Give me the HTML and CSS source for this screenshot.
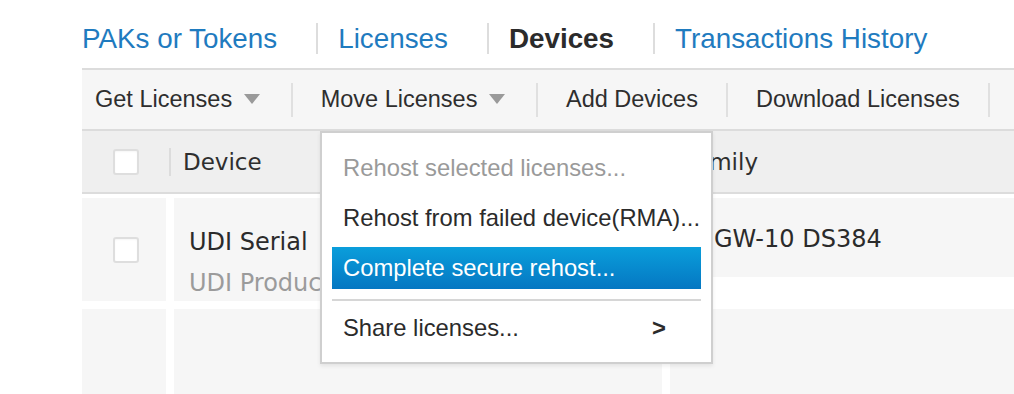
FILE: index.html
```html
<!DOCTYPE html>
<html lang="en">
<head>
    <meta charset="UTF-8">
    <meta name="viewport" content="width=device-width, initial-scale=1.0">
    <title>Devices</title>
    <link rel="stylesheet" href="styles.css">
</head>
<body>

<div class="page">
    <nav class="tabs">
        <a class="tab" href="#">PAKs or Tokens</a>
        <a class="tab" href="#">Licenses</a>
        <a class="tab active" href="#">Devices</a>
        <a class="tab" href="#">Transactions History</a>
    </nav>

    <div class="toolbar">
        <div class="tool first">Get Licenses <span class="caret"></span></div>
        <div class="tool">Move Licenses <span class="caret"></span></div>
        <div class="tool">Add Devices</div>
        <div class="tool">Download Licenses</div>
        <div class="tool"></div>
    </div>

    <div class="grid-head">
        <div class="head-check"><span class="checkbox"></span></div>
        <div class="head-device"><span class="head-label">Device</span></div>
        <div class="head-family">Family</div>
    </div>

    <div class="rows">
        <div class="cell check"><span class="checkbox"></span></div>
        <div class="cell device">
            <div class="serial">UDI Serial</div>
            <div class="product">UDI Product</div>
        </div>
        <div class="cell family short">GW-10 DS384</div>

        <div class="cell check tall"></div>
        <div class="cell device tall"></div>
        <div class="cell family tall"></div>
    </div>

    <!-- dropdown of Move Licenses -->
    <ul class="menu">
        <li class="menu-item disabled">Rehost selected licenses...</li>
        <li class="menu-item">Rehost from failed device(RMA)...</li>
        <li class="menu-item selected">Complete secure rehost...</li>
        <li class="menu-divider"></li>
        <li class="menu-item sub">Share licenses... <span class="more">&gt;</span></li>
    </ul>
</div>

</body>
</html>
```

FILE: styles.css
```css
body {
    margin: 0;
    background: #fff;
    font-family: "Liberation Sans", Arial, sans-serif;
    color: #333;
    overflow: hidden;
}

.page {
    position: relative;
    padding-left: 82px;
}

/* tabs */
.tabs {
    display: flex;
    height: 68px;
    box-sizing: border-box;
    padding-top: 23px;
}

.tab {
    display: block;
    height: 31px;
    line-height: 31px;
    font-size: 27.8px;
    color: #1f7bbf;
    text-decoration: none;
    padding: 0 39px 0 20px;
    border-left: 2px solid #ddd;
    white-space: nowrap;
}

.tab:first-child {
    padding-left: 0;
    border-left: none;
}

.tab.active {
    color: #2b2b2b;
    font-weight: bold;
}

/* toolbar */
.toolbar {
    display: flex;
    align-items: center;
    height: 59px;
    background: #f6f6f6;
    border-top: 2px solid #dcdcdc;
    border-bottom: 2px solid #dcdcdc;
    overflow: hidden;
}

.tool {
    height: 33px;
    line-height: 33px;
    padding: 0 28px 1px;
    font-size: 23.5px;
    color: #2e2e2e;
    border-left: 2px solid #e0e0e0;
    white-space: nowrap;
}

.tool.first {
    padding-left: 13px;
    border-left: none;
}

.caret {
    display: inline-block;
    vertical-align: middle;
    margin: -2px 3px 0 5px;
    border-left: 8px solid transparent;
    border-right: 8px solid transparent;
    border-top: 10px solid #9a9a9a;
}

/* table header */
.grid-head {
    display: flex;
    align-items: center;
    height: 61px;
    background: #efefef;
    border-bottom: 2px solid #dcdcdc;
    font-family: "DejaVu Sans", Verdana, sans-serif;
    font-size: 23px;
    color: #2e2e2e;
    white-space: nowrap;
}

.head-check {
    width: 87px;
    display: flex;
    justify-content: center;
}

.head-device {
    width: 499px;
    height: 28px;
    line-height: 28px;
    border-left: 2px solid #dcdcdc;
    padding-left: 12px;
}

.head-family {
    padding-left: 2px;
    line-height: 28px;
}

.checkbox {
    display: block;
    width: 22px;
    height: 22px;
    background: #fff;
    border: 2px solid #dedede;
    border-radius: 3px;
    box-shadow: inset 0 1px 2px rgba(0, 0, 0, 0.04);
}

/* rows */
.rows {
    display: grid;
    grid-template-columns: 84px 488px 1fr;
    gap: 8px;
    margin-top: 4px;
    font-family: "DejaVu Sans", Verdana, sans-serif;
    font-size: 24px;
    color: #2b2b2b;
}

.cell {
    background: #f6f6f6;
    height: 103px;
    box-sizing: border-box;
}

.cell.tall {
    height: 100px;
}

.cell.check {
    display: flex;
    align-items: center;
    justify-content: center;
    padding-left: 4px;
}

.cell.device {
    padding: 30px 0 0 15px;
}

.serial {
    line-height: 28px;
}

.product {
    line-height: 28px;
    margin-top: 13px;
    color: #9b9b9b;
}

.cell.family {
    padding: 27px 0 0 44px;
    line-height: 28px;
}

.cell.family.short {
    height: 79px;
}

/* dropdown menu */
.menu {
    position: absolute;
    left: 320px;
    top: 131px;
    width: 393px;
    box-sizing: border-box;
    margin: 0;
    padding: 14px 10px 13px;
    list-style: none;
    background: #fff;
    border: 2px solid #cfcfcf;
    box-shadow: 0 2px 4px rgba(0, 0, 0, 0.08);
    font-size: 23.8px;
    color: #2b2b2b;
}

.menu-item {
    height: 42px;
    line-height: 42px;
    padding-left: 11px;
    margin-bottom: 8px;
    white-space: nowrap;
}

.menu-item.disabled {
    color: #9a9a9a;
}

.menu-item.selected {
    color: #fff;
    background: linear-gradient(#0a9edb, #0577c2);
    margin-bottom: 0;
}

.menu-divider {
    height: 2px;
    background: #d6d6d6;
    margin: 10px 0 6px;
}

.menu-item.sub {
    display: flex;
    justify-content: space-between;
    padding-right: 35px;
    margin-bottom: 0;
}

.more {
    font-weight: bold;
}
```
